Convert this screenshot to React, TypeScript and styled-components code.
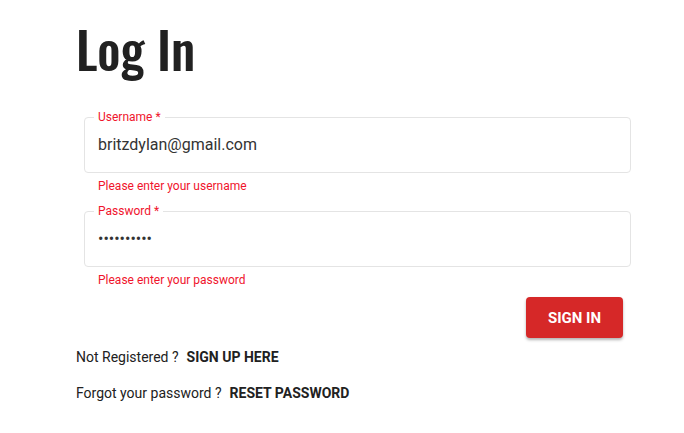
import styled, { createGlobalStyle } from "styled-components";

const GlobalStyle = createGlobalStyle`
  body {
    margin: 0;
    background: #fff;
    font-family: Roboto, "Liberation Sans", sans-serif;
    color: #212121;
  }
`

const fields = [
  { label: 'Username', value: 'britzdylan@gmail.com', error: 'Please enter your username', type: 'text' },
  { label: 'Password', value: 'dylanbritz', error: 'Please enter your password', type: 'password' },
]

const links = [
  { text: 'Not Registered ?', action: 'SIGN UP HERE' },
  { text: 'Forgot your password ?', action: 'RESET PASSWORD' },
]

const App = () => {
  return <Wrapper>
    <GlobalStyle />
    <Title>Log In</Title>
    <Form onSubmit={(e) => e.preventDefault()}>
      {
        fields.map((field) => {
          return <Field key={field.label}>
            <Box>
              <Legend>{field.label} *</Legend>
              <Input type={field.type} defaultValue={field.value} />
            </Box>
            <Helper>{field.error}</Helper>
          </Field>
        })
      }
      <Actions>
        <SubmitButton type="submit">Sign In</SubmitButton>
      </Actions>
    </Form>
    <LinkList>
      {
        links.map((item) => {
          return <LinkRow key={item.action}>
            <span>{item.text}</span>
            <TextLink href="#">{item.action}</TextLink>
          </LinkRow>
        })
      }
    </LinkList>
  </Wrapper>
}

const Wrapper = styled.div`
  width: 555px;
  padding: 12px 0 0 76px;
`

const Title = styled.h1`
  margin: 0 0 33px 0;
  font-family: Oswald, "DejaVu Sans Condensed", "DejaVu Sans", sans-serif;
  font-weight: 500;
  font-size: 51px;
  line-height: 72px;
  color: #212121;
`

const Form = styled.form`
  display: flex;
  flex-direction: column;
  padding-left: 8px;
`

const Field = styled.div`
  display: flex;
  flex-direction: column;
  margin-bottom: 17px;
`

const Box = styled.div`
  position: relative;
  height: 56px;
  box-sizing: border-box;
  padding: 0 13px;
  border: 1px solid #e4e4e4;
  border-radius: 4px;
  display: flex;
  align-items: center;
`

const Legend = styled.span`
  position: absolute;
  top: -9px;
  left: 9px;
  padding: 0 4px;
  background: #fff;
  font-size: 12px;
  line-height: 16px;
  color: #f0142c;
`

const Input = styled.input`
  width: 100%;
  border: none;
  outline: none;
  padding: 0;
  background: transparent;
  font-family: Roboto, "Liberation Sans", sans-serif;
  font-size: 16px;
  line-height: 20px;
  color: #333;
`

const Helper = styled.p`
  margin: 5px 0 0 14px;
  font-size: 12px;
  line-height: 16px;
  color: #f0142c;
`

const Actions = styled.div`
  display: flex;
  justify-content: flex-end;
  margin-top: -8px;
  padding-right: 8px;
`

const SubmitButton = styled.button`
  width: 97px;
  height: 41px;
  border: none;
  border-radius: 4px;
  background: #d62828;
  color: #fff;
  font-family: Roboto, "Liberation Sans", sans-serif;
  font-weight: 700;
  font-size: 15px;
  text-transform: uppercase;
  box-shadow: 0 2px 3px rgba(0, 0, 0, 0.3);
  cursor: pointer;
`

const LinkList = styled.div`
  display: flex;
  flex-direction: column;
  row-gap: 19px;
  margin-top: 11px;
`

const LinkRow = styled.div`
  display: flex;
  column-gap: 8px;
  font-size: 14px;
  line-height: 17px;
  color: #212121;
`

const TextLink = styled.a`
  font-weight: 700;
  color: #212121;
  text-decoration: none;
`

export default App
